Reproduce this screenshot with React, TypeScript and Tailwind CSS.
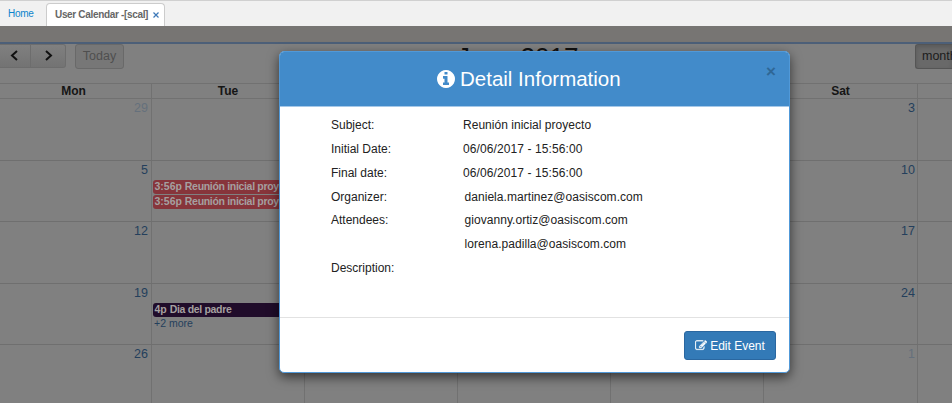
const weeks = [
  { h: 'h-[62px]', first: '29', sat: '3', firstMuted: true },
  { h: 'h-[61px]', first: '5', sat: '10' },
  { h: 'h-[62px]', first: '12', sat: '17' },
  { h: 'h-[61px]', first: '19', sat: '24' },
  { h: 'h-[59px]', first: '26', sat: '1', satMuted: true },
];

const details = [
  { label: 'Subject:', value: 'Reunión inicial proyecto', style: 'tracking-[0.03px]' },
  { label: 'Initial Date:', value: '06/06/2017 - 15:56:00', style: 'tracking-[0.1px]' },
  { label: 'Final date:', value: '06/06/2017 - 15:56:00', style: 'tracking-[0.1px]' },
  { label: 'Organizer:', value: 'daniela.martinez@oasiscom.com', style: 'pl-[1.5px] tracking-[0.05px]' },
  { label: 'Attendees:', value: 'giovanny.ortiz@oasiscom.com', style: 'pl-[1.5px] tracking-[0.05px]' },
  { label: '', value: 'lorena.padilla@oasiscom.com', style: 'pl-[1.5px] tracking-[0.05px]' },
  { label: 'Description:', value: '', style: '' },
];

const columns = 'grid grid-cols-[152px_153px_153px_153px_153px_154px_34px]';

function Chevron({ right = false }: { right?: boolean }) {
  return (
    <svg viewBox="0 0 8 12" className="h-3 w-2" fill="none" stroke="#111" strokeWidth="2">
      <path d={right ? 'M1 1L6 5.5L1 10' : 'M7 1L2 5.5L7 10'} />
    </svg>
  );
}

function InfoIcon() {
  return (
    <svg viewBox="128 128 1536 1536" className="h-[18px] w-[18px]" fill="currentColor">
      <path d="M1152 1376v-160q0-14-9-23t-23-9h-96v-512q0-14-9-23t-23-9h-320q-14 0-23 9t-9 23v160q0 14 9 23t23 9h96v320h-96q-14 0-23 9t-9 23v160q0 14 9 23t23 9h448q14 0 23-9t9-23zm-128-896v-160q0-14-9-23t-23-9h-192q-14 0-23 9t-9 23v160q0 14 9 23t23 9h192q14 0 23-9t9-23zm640 416q0 209-103 385.5t-279.5 279.5-385.5 103-385.5-103-279.5-279.5-103-385.5 103-385.5 279.5-279.5 385.5-103 385.5 103 279.5 279.5 103 385.5z" />
    </svg>
  );
}

function EditIcon() {
  return (
    <svg viewBox="0 128 1792 1536" className="h-[11px] w-[12px]" fill="currentColor" stroke="currentColor" strokeWidth="40">
      <path d="M888 1184l116-116-152-152-116 116v56h96v96h56zm440-720q-16-16-33 1l-350 350q-17 17-1 33t33-1l350-350q17-17 1-33zm80 594v190q0 119-84.5 203.5t-203.5 84.5h-832q-119 0-203.5-84.5t-84.5-203.5v-832q0-119 84.5-203.5t203.5-84.5h832q63 0 117 25 15 7 18 23 3 17-9 29l-49 49q-14 14-32 8-23-6-45-6h-832q-66 0-113 47t-47 113v832q0 66 47 113t113 47h832q66 0 113-47t47-113v-126q0-13 9-22l64-64q15-15 35-7t20 29zm-96-738l288 288-672 672h-288v-288zm444 132l-92 92-288-288 92-92q28-28 68-28t68 28l152 152q28 28 28 68t-28 68z" />
    </svg>
  );
}

function Event({ time, title, color }: { time: string; title: string; color: string }) {
  return (
    <div className={`ml-px h-[14px] overflow-hidden rounded-l-[3px] pl-[1.5px] text-[10.5px] leading-[13px] font-bold whitespace-nowrap text-[#a5a0a0] ${color}`}>
      <span>{time}</span> <span className="tracking-[-0.32px]">{title}</span>
    </div>
  );
}

function Calendar() {
  return (
    <div className="h-[377px] bg-[#808080]">
      <div className="h-4 bg-[#777573]" />
      <div className="h-[2px] bg-[#4c5f78]" />
      <div className="flex h-[39px] items-start">
        <div className="flex w-[457px]">
          <div className="flex h-6 w-[66px] rounded-r-[3px] border border-l-0 border-[#6d6d6d] bg-linear-to-b from-[#808080] to-[#737373]">
            <div className="flex w-[31px] items-center border-r border-[#6d6d6d] pl-[10px]"><Chevron /></div>
            <div className="flex flex-1 items-center pl-[14px]"><Chevron right /></div>
          </div>
          <div className="ml-[9px] flex h-[25px] w-[49px] items-center justify-center rounded-[3px] border border-[#696969] bg-[#777] text-[12.5px] text-[#4f4f4f]">Today</div>
        </div>
        <h2 className="w-[140px] text-[26px] leading-[26px] whitespace-nowrap text-[#111]">June 2017</h2>
        <div className="flex flex-1 justify-end">
          <div className="flex h-[25px] w-[37px] items-center overflow-hidden rounded-l-[3px] border border-r-0 border-[#555] bg-[#696969] pl-[6px] text-[12.5px] text-[#1c1c1c] shadow-[inset_0_2px_4px_rgba(0,0,0,0.15)]">month</div>
        </div>
      </div>
      <div className={`${columns} h-4 border-y border-[#717171] text-center text-[12px] leading-[15px] font-bold text-[#151515]`}>
        {['Mon', 'Tue', 'Wed', 'Thu', 'Fri', 'Sat', ''].map((day, i) => (
          <div key={i} className={i === 0 ? 'border-r border-[#717171] pr-[4px]' : i === 6 ? '' : 'border-r border-[#717171]'}>{day}</div>
        ))}
      </div>
      {weeks.map((week, row) => (
        <div key={row} className={`${columns} ${week.h} border-b border-[#6f6f6f] text-[12.5px]`}>
          <div className={`border-r border-[#717171] pt-px pr-[3px] text-right leading-4 ${week.firstMuted ? 'text-[#65707c]' : 'text-[#243f5c]'}`}>{week.first}</div>
          <div className="border-r border-[#717171]">
            {row === 1 && (
              <div className="flex flex-col gap-px pt-[19px]">
                <Event time="3:56p" title="Reunión inicial proyecto" color="bg-[#87353b]" />
                <Event time="3:56p" title="Reunión inicial proyecto" color="bg-[#87353b]" />
              </div>
            )}
            {row === 3 && (
              <div className="pt-[19px]">
                <Event time="4p" title="Dia del padre" color="bg-[#200c2a]" />
                <div className="pl-[2px] text-[10.5px] leading-[12px] text-[#243f5c]">+2 more</div>
              </div>
            )}
          </div>
          <div className="border-r border-[#717171]" />
          <div className="border-r border-[#717171]" />
          <div className="border-r border-[#717171]" />
          <div className={`border-r border-[#717171] pt-px pr-[2px] text-right leading-4 ${week.satMuted ? 'text-[#65707c]' : 'text-[#243f5c]'}`}>{week.sat}</div>
          <div />
        </div>
      ))}
    </div>
  );
}

function DetailDialog() {
  return (
    <div className="absolute top-[51px] left-[279px] flex h-[322px] w-[511px] flex-col overflow-hidden rounded-[5px] border border-[#5199d8] bg-white text-[#222] shadow-[0_4px_12px_rgba(0,0,0,0.6)]">
      <div className="relative flex h-[55px] items-center gap-[5px] border-b border-[#a5c8e8] bg-[#428bca] pl-[157px] text-white">
        <InfoIcon />
        <span className="text-[20.5px] leading-6">Detail Information</span>
        <span className="absolute top-[10px] right-[13px] text-[17px] leading-5 font-bold text-[#2f6796]">×</span>
      </div>
      <div className="flex h-[210px] flex-col pt-[7px] pl-[51px] text-[12px] leading-[23px]">
        {details.map((d, i) => (
          <div key={i} className="flex h-[23.85px]">
            <span className="w-[132px]">{d.label}</span>
            <span className={d.style}>{d.value}</span>
          </div>
        ))}
      </div>
      <div className="flex flex-1 items-start justify-end border-t border-[#e2e2e2] pt-[13px] pr-[13px]">
        <button className="flex h-[29px] w-[92px] items-center justify-center gap-[3px] rounded-[3px] border border-[#2a67a0] bg-[#337ab7] text-[12px] text-white">
          <EditIcon />
          <span>Edit Event</span>
        </button>
      </div>
    </div>
  );
}

export default function App() {
  return (
    <div className="relative h-[403px] w-[952px] overflow-hidden font-['Liberation_Sans',Arial,sans-serif]">
      <div className="flex h-[26px] items-end border-t border-[#d0d0d0] bg-[#f1f1f1] text-[10px]">
        <span className="w-[46px] pb-[6px] pl-[8px] leading-3 tracking-[-0.25px] text-[#0d84cc]">Home</span>
        <div className="flex h-[23px] w-[119px] items-center rounded-t-[4px] border border-b-0 border-[#ccc] bg-white pl-[8px] font-bold whitespace-nowrap text-[#666]">
          <span className="-mt-[2px] tracking-[-0.33px]">User Calendar -[scal]</span>
          <svg viewBox="0 0 6 6" className="ml-[5px] h-[6px] w-[6px] shrink-0" stroke="#3d78b8" strokeWidth="1.2"><path d="M.5 .5L5.5 5.5M5.5 .5L.5 5.5" /></svg>
        </div>
      </div>
      <Calendar />
      <DetailDialog />
    </div>
  );
}
